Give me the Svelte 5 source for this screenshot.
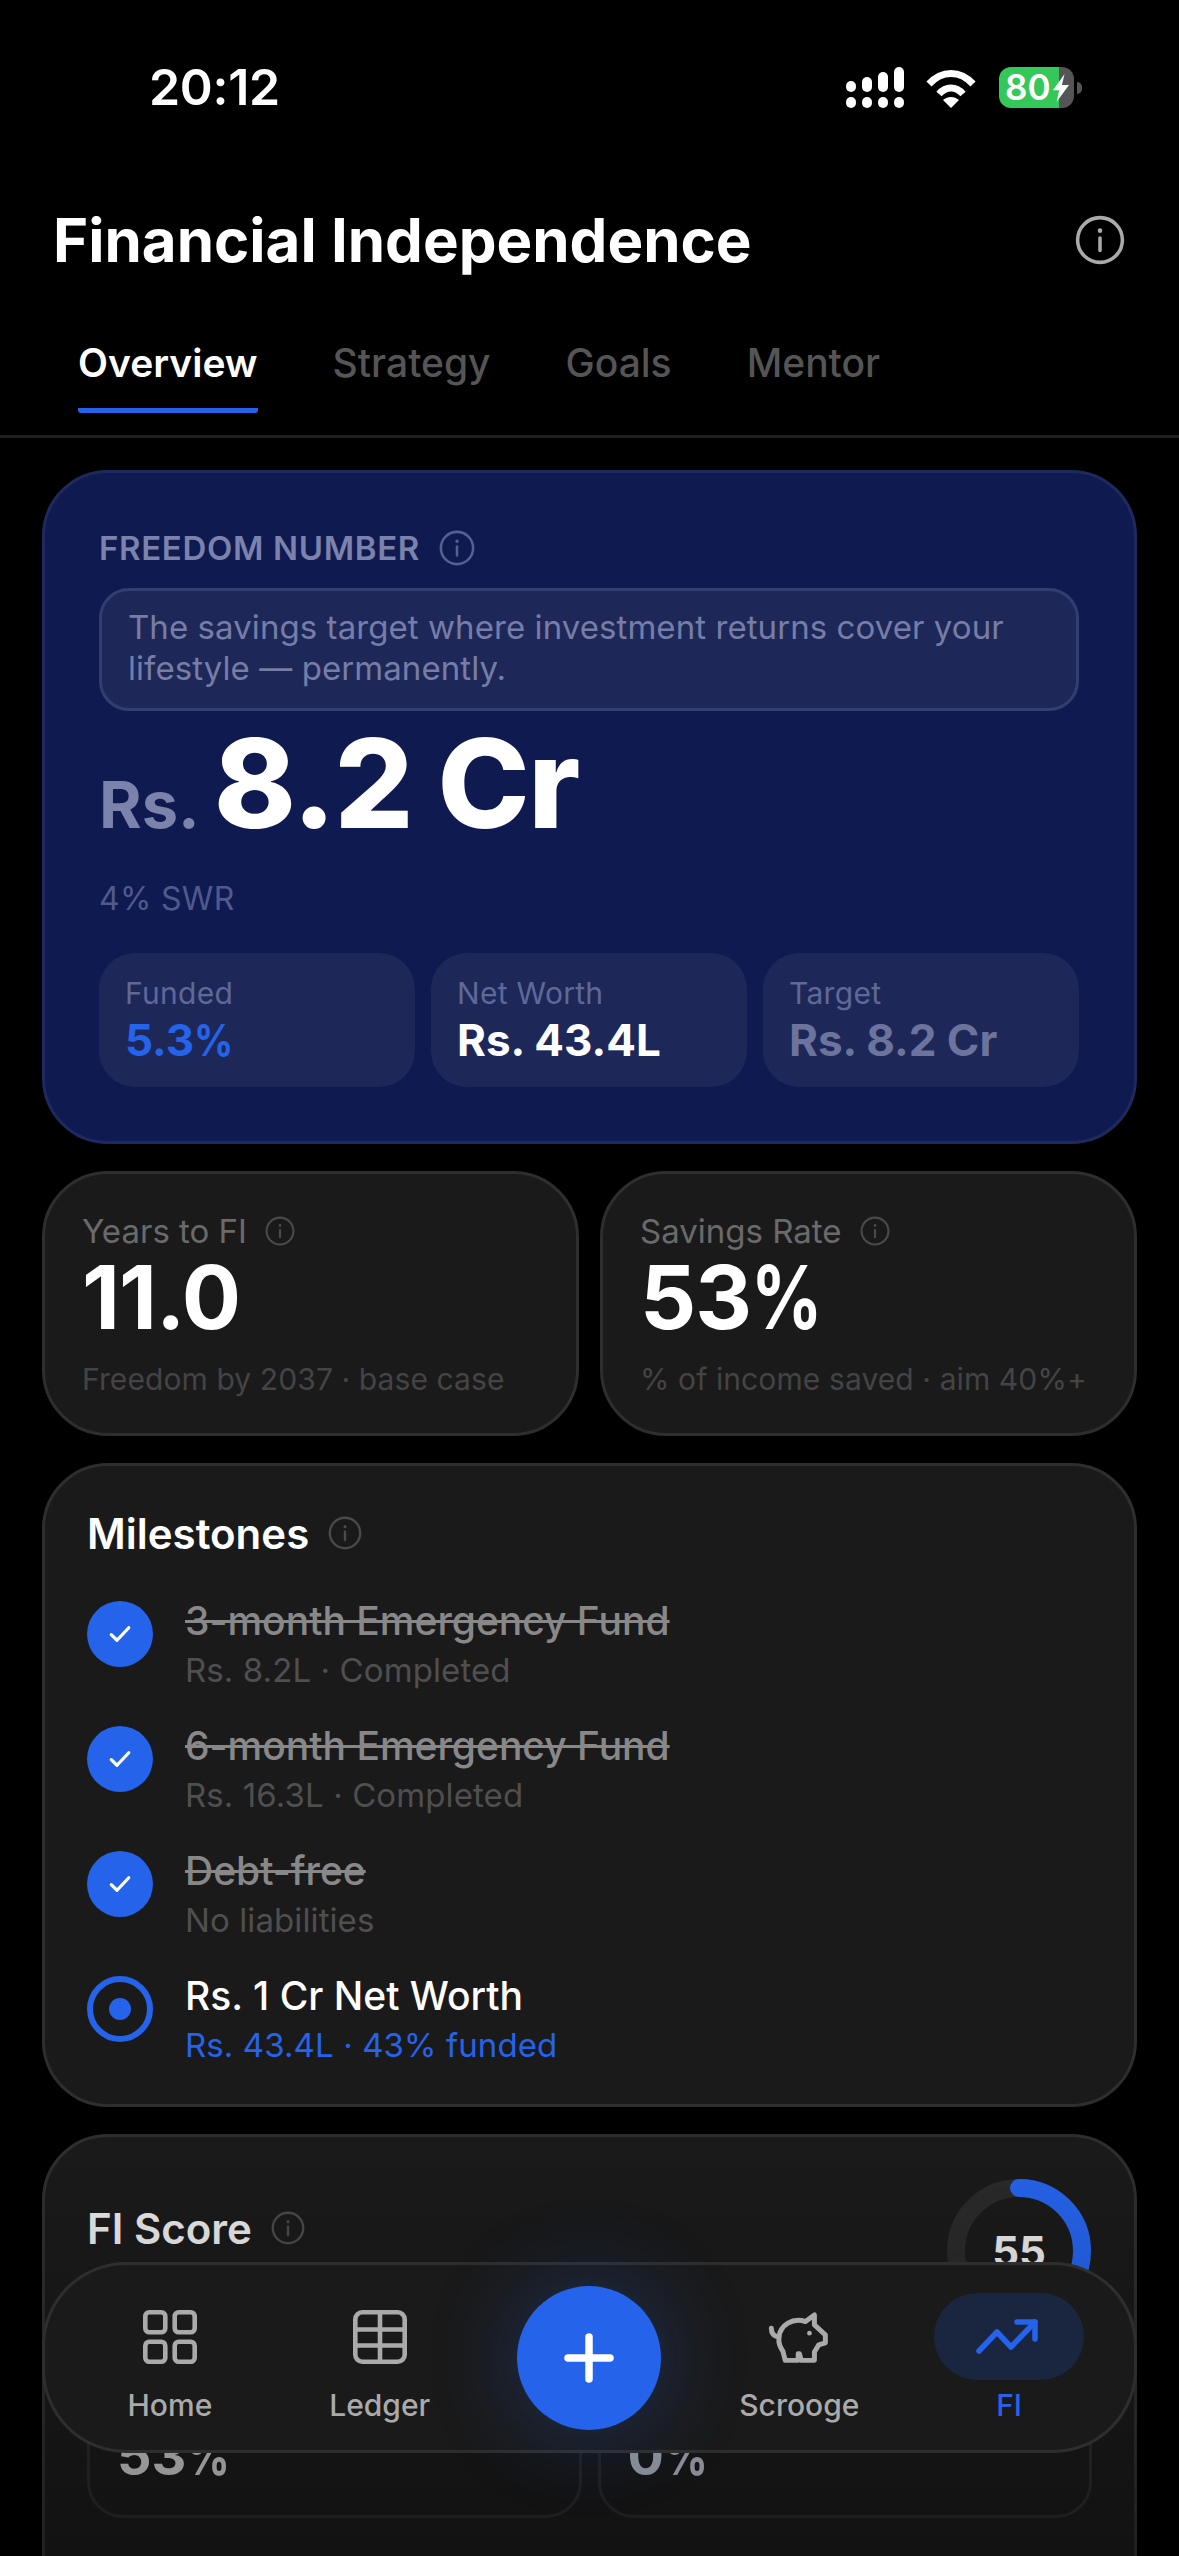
<script>
  const tabs = ['Overview', 'Strategy', 'Goals', 'Mentor'];
  const stats = [
    { label: 'Funded', value: '5.3', pct: true, cls: 'blue' },
    { label: 'Net Worth', value: 'Rs. 43.4L', cls: 'white' },
    { label: 'Target', value: 'Rs. 8.2 Cr', cls: 'muted' }
  ];
  const miles = [
    { t: '3-month Emergency Fund', s: 'Rs. 8.2L · Completed' },
    { t: '6-month Emergency Fund', s: 'Rs. 16.3L · Completed' },
    { t: 'Debt-free', s: 'No liabilities' }
  ];
  const r = 63;
  const c = 2 * Math.PI * r;
  const dash = `${c * 0.55} ${c}`;
</script>

{#snippet info(cls)}
  <svg class="info {cls}" viewBox="0 0 48 48" fill="none" stroke="currentColor">
    <circle cx="24" cy="24" r="21.5" stroke-width="3.4" />
    <path d="M24 22v12" stroke-width="3.4" stroke-linecap="round" />
    <circle cx="24" cy="15" r="2.2" fill="currentColor" stroke="none" />
  </svg>
{/snippet}

<div class="screen">
  <div class="status">
    <span class="time">20:12</span>
    <div class="sysicons">
      <svg class="signal" viewBox="846 67 58 41" fill="#fff">
        <rect x="846" y="81" width="10" height="11" rx="5" />
        <rect x="862" y="77" width="10" height="15" rx="5" />
        <rect x="878" y="72" width="10" height="20" rx="5" />
        <rect x="894" y="67" width="10" height="25" rx="5" />
        <rect x="846" y="97" width="10" height="11" rx="5" />
        <rect x="862" y="97" width="10" height="11" rx="5" />
        <rect x="878" y="97" width="10" height="11" rx="5" />
        <rect x="894" y="97" width="10" height="11" rx="5" />
      </svg>
      <svg class="wifi" viewBox="926 68 50 40" fill="none" stroke="#fff" stroke-width="7">
        <path d="M929 84C942 70 960 70 973 84" />
        <path d="M939 94C946 86 956 86 963 94" />
        <path d="M943 100C948 96 954 96 959 100L951 108Z" fill="#fff" stroke="none" />
      </svg>
      <div class="battery">
        <div class="batt-body">
          <span class="batt-num">80</span>
          <svg class="bolt" viewBox="0 0 18 36" fill="#fff" preserveAspectRatio="none"><path d="M13 0 0 21h7l-3 15L18 14h-8z" /></svg>
        </div>
        <div class="nub"></div>
      </div>
    </div>
  </div>

  <header class="head">
    <h1>Financial Independence</h1>
    {@render info('i-head')}
  </header>

  <nav class="tabs">
    {#each tabs as t, i}
      <div class="tab" class:active={i === 0}>{t}</div>
    {/each}
  </nav>

  <main class="content">
    <section class="hero">
      <div class="hero-label"><span>FREEDOM NUMBER</span>{@render info('i-hero')}</div>
      <p class="note">The savings target where investment returns cover your lifestyle — permanently.</p>
      <div class="amount"><span class="rs">Rs.</span><span class="big">8.2 Cr</span></div>
      <div class="swr">4% SWR</div>
      <div class="hero-stats">
        {#each stats as s}
          <div class="hstat">
            <div class="hstat-l">{s.label}</div>
            <div class="hstat-v {s.cls}">{s.value}{#if s.pct}<span class="pct wide">%</span>{/if}</div>
          </div>
        {/each}
      </div>
    </section>

    <div class="pair">
      <section class="card kpi">
        <div class="kpi-l"><span>Years to FI</span>{@render info('i-kpi')}</div>
        <div class="kpi-v">11.0</div>
        <div class="kpi-s">Freedom by 2037 · base case</div>
      </section>
      <section class="card kpi">
        <div class="kpi-l"><span>Savings Rate</span>{@render info('i-kpi')}</div>
        <div class="kpi-v">53<span class="pct">%</span></div>
        <div class="kpi-s">% of income saved · aim 40%+</div>
      </section>
    </div>

    <section class="card miles">
      <div class="sec-title"><span>Milestones</span>{@render info('i-sec')}</div>
      <div class="mlist">
        {#each miles as m}
          <div class="mitem">
            <div class="mdot">
              <svg viewBox="0 0 24 24" fill="none" stroke="#fff" stroke-width="2.6" stroke-linecap="round" stroke-linejoin="round"><path d="M5 12.5l4.6 4.5L19 7" /></svg>
            </div>
            <div class="mtext">
              <div class="mt done">{m.t}</div>
              <div class="ms">{m.s}</div>
            </div>
          </div>
        {/each}
        <div class="mitem">
          <div class="mring"><div class="mcore"></div></div>
          <div class="mtext">
            <div class="mt">Rs. 1 Cr Net Worth</div>
            <div class="ms now">Rs. 43.4L · 43% funded</div>
          </div>
        </div>
      </div>
    </section>

    <section class="card score">
      <div class="score-top">
        <div class="sec-title"><span>FI Score</span>{@render info('i-sec')}</div>
        <div class="ring">
          <svg viewBox="0 0 144 144" fill="none" stroke-width="18">
            <circle cx="72" cy="72" r={r} stroke="#2a2a2a" />
            <circle cx="72" cy="72" r={r} stroke="#2563eb" stroke-linecap="round" stroke-dasharray={dash} transform="rotate(-90 72 72)" />
          </svg>
          <span class="ring-n">55</span>
        </div>
      </div>
      <div class="sub-pair">
        <div class="sub-card"><div class="sub-v">53<span class="pct">%</span></div></div>
        <div class="sub-card"><div class="sub-v slate">0<span class="pct">%</span></div></div>
      </div>
    </section>
  </main>

  <div class="fade"></div>

  <nav class="bar">
    <div class="item">
      <svg class="ic" viewBox="0 0 54 54" fill="none" stroke="#aaa" stroke-width="4.6">
        <rect x="2.3" y="2.3" width="20" height="20" rx="4" />
        <rect x="31.7" y="2.3" width="20" height="20" rx="4" />
        <rect x="2.3" y="31.7" width="20" height="20" rx="4" />
        <rect x="31.7" y="31.7" width="20" height="20" rx="4" />
      </svg>
      <span>Home</span>
    </div>
    <div class="item">
      <svg class="ic" viewBox="0 0 54 54" fill="none" stroke="#aaa" stroke-width="4.6">
        <rect x="2.3" y="2.3" width="49.4" height="49.4" rx="7" />
        <path d="M27 2v50M2 19.5h50M2 35.5h50" />
      </svg>
      <span>Ledger</span>
    </div>
    <div class="item plus-slot">
      <button class="plus" aria-label="Add">
        <svg viewBox="0 0 50 50" fill="none" stroke="#fff" stroke-width="7.5" stroke-linecap="round"><path d="M25 4v42M4 25h42" /></svg>
      </button>
    </div>
    <div class="item">
      <svg class="ic pig" viewBox="140 200 200 175" fill="none" stroke="#aaa" stroke-width="15" stroke-linejoin="round" stroke-linecap="round">
        <path d="M155 258C155 275 165 283 178 285" />
        <path d="M285 218V248L318 278V302L298 308L285 330V355H245L240 335H236V355H197L190 328C182 315 176 305 178 285C182 248 220 225 258 238Z" />
        <circle cx="270" cy="273" r="7" fill="#aaa" stroke="none" />
      </svg>
      <span>Scrooge</span>
    </div>
    <div class="item act">
      <div class="pill">
        <svg viewBox="0 0 66 40" fill="none" stroke="#2563eb" stroke-width="5.5" stroke-linecap="round" stroke-linejoin="round">
          <path d="M3 34L21 15L35 30L59 5" /><path d="M41 5H59V22" />
        </svg>
      </div>
      <span>FI</span>
    </div>
  </nav>
</div>

<style>
  :global(body) { margin: 0; background: #000; }
  .screen {
    position: relative;
    width: 1179px;
    height: 2556px;
    overflow: hidden;
    background: #000;
    color: #fff;
    font-family: Inter, "Noto Sans", sans-serif;
  }
  .status {
    height: 172px;
    box-sizing: border-box;
    padding: 44px 97px 0 149px;
    display: flex;
    justify-content: space-between;
    align-items: flex-start;
  }
  .time { font-size: 50px; font-weight: 600; line-height: 86px; letter-spacing: -0.3px; }
  .sysicons { display: flex; align-items: flex-start; padding-top: 23px; }
  .signal { width: 58px; height: 41px; }
  .wifi { width: 50px; height: 40px; margin-left: 22px; margin-top: 1px; }
  .battery { display: flex; align-items: center; margin-left: 23px; height: 41px; }
  .batt-body {
    position: relative;
    width: 75px;
    height: 41px;
    border-radius: 12px;
    background: linear-gradient(90deg, #34c759 80%, #555 80%);
    font-size: 35px;
    font-weight: 600;
    line-height: 41px;
  }
  .batt-num { position: absolute; left: 6px; top: 0; }
  .bolt { position: absolute; left: 54px; top: 7px; width: 16px; height: 28px; }
  .nub { width: 5px; height: 12px; margin-left: 3px; background: #555; border-radius: 0 6px 6px 0; }

  .head {
    height: 90px;
    margin-top: 23px;
    padding: 0 53px;
    display: flex;
    justify-content: space-between;
    align-items: center;
  }
  h1 { margin: 0; font-size: 60px; font-weight: 700; }
  .info { display: block; flex: none; }
  .i-head { width: 50px; height: 50px; color: #aaa; margin-right: 1px; }
  .i-hero { width: 36px; height: 36px; color: #555f90; margin-left: 19px; }
  .i-kpi { width: 30px; height: 30px; color: #4a4a4a; margin-left: 18px; }
  .i-sec { width: 34px; height: 34px; color: #4a4a4a; margin-left: 19px; }
  .pct { display: inline-block; transform: scaleX(0.8); transform-origin: left; margin-right: -0.15em; }
  .pct.wide { transform: scaleX(0.88); }

  .tabs {
    height: 153px;
    box-sizing: border-box;
    border-bottom: 3px solid #1f1f1f;
    padding-left: 78px;
    display: flex;
    gap: 75px;
  }
  .tab {
    height: 128px;
    box-sizing: border-box;
    line-height: 156px;
    font-size: 39px;
    font-weight: 500;
    color: #555;
  }
  .tab.active { color: #fff; border-bottom: 5px solid #2563eb; border-radius: 0 0 3px 3px; font-weight: 600; }

  .content { padding: 32px 42px 0; display: flex; flex-direction: column; gap: 27px; }
  .hero {
    height: 674px;
    box-sizing: border-box;
    padding: 52px 55px 0 54px;
    border: 3px solid #1e2a5e;
    border-radius: 66px;
    background: #0f1a50;
  }
  .hero-label {
    display: flex;
    align-items: center;
    height: 45px;
    font-size: 33px;
    font-weight: 600;
    color: #7b82ab;
    letter-spacing: 0.65px;
  }
  .note {
    margin: 18px 0 0;
    height: 123px;
    box-sizing: border-box;
    padding: 16px 26px;
    border: 3px solid #323e70;
    border-radius: 30px;
    background: #1d2859;
    font-size: 33px;
    line-height: 41px;
    color: #767da6;
    letter-spacing: 0.07px;
  }
  .amount { display: flex; align-items: baseline; height: 130px; margin-top: 10px; }
  .rs { font-size: 65px; line-height: 1; font-weight: 700; color: #7b82ab; margin-right: 14px; }
  .big { font-size: 124px; line-height: 1; font-weight: 800; letter-spacing: -1.5px; }
  .swr { margin-top: 28px; height: 40px; line-height: 40px; font-size: 32px; color: #4f5a8c; letter-spacing: 0.3px; }
  .hero-stats { margin-top: 34px; display: grid; grid-template-columns: repeat(3, 1fr); gap: 16px; }
  .hstat {
    height: 134px;
    box-sizing: border-box;
    padding: 22px 26px 0;
    border-radius: 36px;
    background: #1d2859;
  }
  .hstat-l { font-size: 30px; line-height: 36px; color: #5f6997; letter-spacing: 0.3px; }
  .hstat-v { font-size: 44px; line-height: 52px; font-weight: 700; margin-top: 3px; }
  .blue { color: #2563eb; }
  .white { color: #fff; }
  .muted { color: #6c749e; }

  .pair { display: grid; grid-template-columns: 1fr 1fr; gap: 21px; }
  .card {
    box-sizing: border-box;
    background: #1a1a1a;
    border: 3px solid #2e2e2e;
    border-radius: 66px;
  }
  .kpi { height: 265px; padding: 37px 37px 0; }
  .kpi-l { display: flex; align-items: center; height: 40px; font-size: 33px; color: #6a6a6a; }
  .kpi-v { height: 88px; margin-top: 2px; line-height: 88px; font-size: 88px; font-weight: 700; letter-spacing: -1px; }
  .kpi-s { margin-top: 18px; font-size: 30px; line-height: 40px; color: #444; letter-spacing: 0.1px; }

  .miles { height: 644px; padding: 42px 42px 0; }
  .sec-title { display: flex; align-items: center; height: 50px; font-size: 42px; font-weight: 600; }
  .mlist { margin-top: 43px; display: flex; flex-direction: column; gap: 35px; }
  .mitem { display: flex; gap: 32px; height: 90px; }
  .mdot, .mring { width: 66px; height: 66px; border-radius: 50%; box-sizing: border-box; flex: none; }
  .mdot { background: #2563eb; display: flex; align-items: center; justify-content: center; }
  .mdot svg { width: 30px; height: 30px; }
  .mring { border: 6px solid #2563eb; display: flex; align-items: center; justify-content: center; }
  .mcore { width: 22px; height: 22px; border-radius: 50%; background: #2563eb; }
  .mt { font-size: 39px; line-height: 40px; font-weight: 500; color: #fff; }
  .mt.done { color: #888; text-decoration: line-through; }
  .ms { margin-top: 10px; font-size: 33px; line-height: 38px; color: #4f4f4f; letter-spacing: 0.1px; }
  .ms.now { color: #2563eb; }

  .score { height: 560px; padding: 0 42px; }
  .score-top { display: flex; justify-content: space-between; align-items: flex-start; padding-top: 42px; height: 144px; }
  .score-top .sec-title { margin-top: 24px; color: #e8e8e8; }
  .ring { position: relative; width: 144px; height: 144px; margin-right: 1px; }
  .ring svg { width: 144px; height: 144px; display: block; }
  .ring-n {
    position: absolute;
    inset: 0;
    display: flex;
    align-items: center;
    justify-content: center;
    font-size: 42px;
    font-weight: 700;
    color: #e8e8e8;
  }
  .sub-pair { display: grid; grid-template-columns: 1fr 1fr; gap: 16px; margin-top: 10px; }
  .sub-card {
    height: 185px;
    box-sizing: border-box;
    padding: 85px 27px 0;
    background: #1a1a1a;
    border: 3px solid #2a2a2a;
    border-radius: 36px;
  }
  .sub-v { font-size: 54px; line-height: 70px; font-weight: 700; color: #c4c4c4; }
  .slate { color: #b4b8c4; }

  .fade {
    position: absolute;
    left: 0;
    right: 0;
    bottom: 0;
    height: 420px;
    background: linear-gradient(transparent, rgba(0, 0, 0, 0.3));
    pointer-events: none;
  }

  .bar {
    position: absolute;
    left: 42px;
    top: 2262px;
    width: 1095px;
    height: 191px;
    box-sizing: border-box;
    padding: 0 20px;
    display: grid;
    grid-template-columns: repeat(5, 1fr);
    background: #1a1a1a;
    border: 3px solid #2e2e2e;
    border-radius: 84px;
  }
  .item { position: relative; display: flex; flex-direction: column; align-items: center; font-size: 30px; font-weight: 500; color: #aaa; padding-top: 45px; }
  .item span { margin-top: 21px; line-height: 40px; }
  .ic { width: 54px; height: 54px; display: block; }
  .pig { width: 67px; height: 58px; margin-top: -1px; margin-bottom: -3px; margin-left: 1px; }
  .plus-slot { padding-top: 21px; }
  .plus {
    width: 144px;
    height: 144px;
    padding: 0;
    border: none;
    border-radius: 50%;
    background: #2563eb;
    box-shadow: 0 0 90px rgba(37, 99, 235, 0.3);
    display: flex;
    align-items: center;
    justify-content: center;
  }
  .plus svg { width: 50px; height: 50px; }
  .act { color: #2563eb; }
  .pill {
    position: absolute;
    top: 28px;
    width: 150px;
    height: 87px;
    border-radius: 44px;
    background: #1a2540;
    display: flex;
    align-items: center;
    justify-content: center;
  }
  .pill svg { width: 66px; height: 40px; }
  .act span { margin-top: 75px; }
</style>
